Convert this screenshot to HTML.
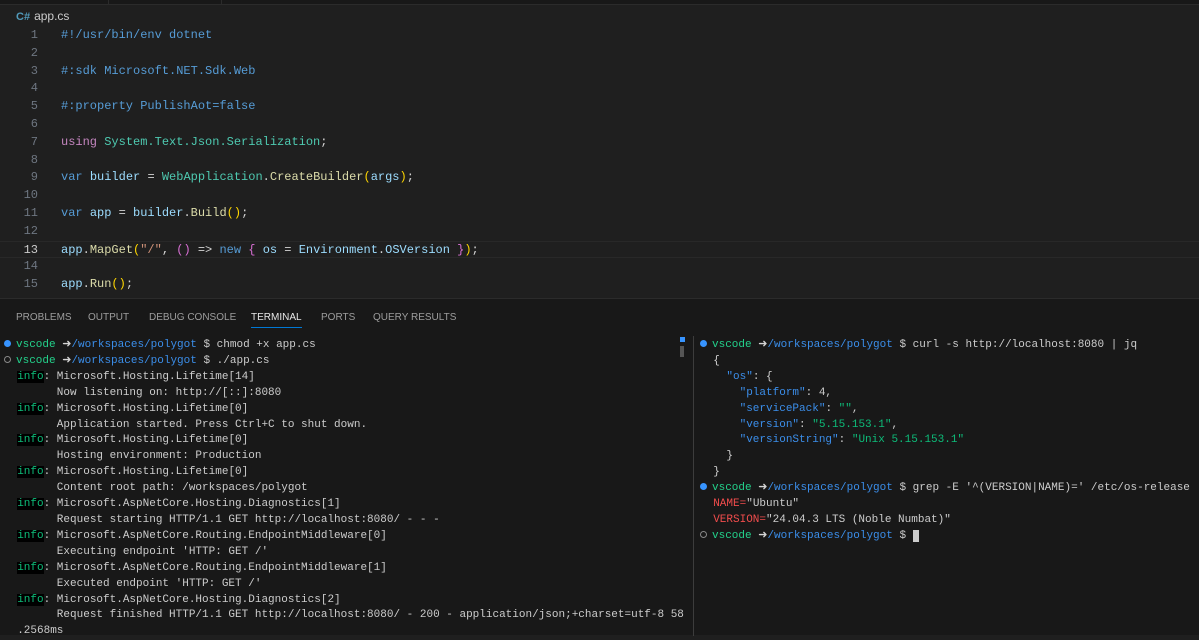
<!DOCTYPE html>
<html><head><meta charset="utf-8"><style>
*{margin:0;padding:0;box-sizing:border-box}
body{width:1199px;height:635px;background:#1f1f1f;overflow:hidden;position:relative;font-family:"Liberation Mono",monospace;color:#cccccc}
.top{position:absolute;left:0;top:0;width:1199px;height:5px;background:#181818;border-bottom:1px solid #2b2b2b}
.top i{position:absolute;top:0;width:1px;height:5px;background:#2b2b2b}
.bc{position:absolute;left:16px;top:9px;font:12px "Liberation Sans",sans-serif;color:#cccccc}
.bc b{color:#519aba;font-weight:bold;font-size:11px;margin-right:4px}
.ed{position:absolute;left:0;top:27px;width:1199px}
.ln{height:17.8px;line-height:17.8px;font-size:12px;white-space:pre;position:relative}
.ln .n{position:absolute;left:0;width:38px;text-align:right;color:#6e7681}
.ln .c{position:absolute;left:61px}
.cur{border-top:1px solid #282828;border-bottom:1px solid #282828}
.cur .n{color:#cccccc}
.k{color:#569cd6}.t{color:#4ec9b0}.p{color:#c586c0}.v{color:#9cdcfe}.f{color:#dcdcaa}.s{color:#ce9178}.y{color:#ffd700}.m{color:#da70d6}.w{color:#d4d4d4}.pp{color:#569cd6}
.panel{position:absolute;left:0;top:298px;width:1199px;height:337px;background:#181818;border-top:1px solid #2b2b2b}
.tabs{position:absolute;top:13px;left:16px;font:10px "Liberation Sans",sans-serif;color:#9d9d9d}
.tabs span{position:absolute;white-space:nowrap}
.tabs .a{color:#e7e7e7;border-bottom:1px solid #0078d4;padding-bottom:4px}
.term{position:absolute;font-size:11px;line-height:15.9px;white-space:pre;color:#cccccc}
.g{color:#23d18b}.b{color:#3b8eea}.gr{color:#0dbc79}.r{color:#f14c4c}.jn{color:#3b8eea}
.info{color:#0dbc79;background:#000}
.dot{display:inline-block;width:7px;height:7px;border-radius:50%;background:#3794ff;vertical-align:0px;margin-right:5px}
.dot.o{background:none;border:1px solid #888}
</style></head><body>
<div class="top"><i style="left:108px"></i><i style="left:221px"></i></div>
<div class="bc"><b>C#</b>app.cs</div>
<div class="ed">
<div class="ln"><span class="n">1</span><span class="c pp">#!/usr/bin/env dotnet</span></div>
<div class="ln"><span class="n">2</span></div>
<div class="ln"><span class="n">3</span><span class="c pp">#:sdk Microsoft.NET.Sdk.Web</span></div>
<div class="ln"><span class="n">4</span></div>
<div class="ln"><span class="n">5</span><span class="c pp">#:property PublishAot=false</span></div>
<div class="ln"><span class="n">6</span></div>
<div class="ln"><span class="n">7</span><span class="c"><span class="p">using</span> <span class="t">System.Text.Json.Serialization</span><span class="w">;</span></span></div>
<div class="ln"><span class="n">8</span></div>
<div class="ln"><span class="n">9</span><span class="c"><span class="k">var</span> <span class="v">builder</span> <span class="w">=</span> <span class="t">WebApplication</span><span class="w">.</span><span class="f">CreateBuilder</span><span class="y">(</span><span class="v">args</span><span class="y">)</span><span class="w">;</span></span></div>
<div class="ln"><span class="n">10</span></div>
<div class="ln"><span class="n">11</span><span class="c"><span class="k">var</span> <span class="v">app</span> <span class="w">=</span> <span class="v">builder</span><span class="w">.</span><span class="f">Build</span><span class="y">()</span><span class="w">;</span></span></div>
<div class="ln"><span class="n">12</span></div>
<div class="ln cur"><span class="n">13</span><span class="c"><span class="v">app</span><span class="w">.</span><span class="f">MapGet</span><span class="y">(</span><span class="s">"/"</span><span class="w">, </span><span class="m">()</span><span class="w"> =&gt; </span><span class="k">new</span> <span class="m">{</span> <span class="v">os</span> <span class="w">=</span> <span class="v">Environment</span><span class="w">.</span><span class="v">OSVersion</span> <span class="m">}</span><span class="y">)</span><span class="w">;</span></span></div>
<div class="ln"><span class="n">14</span></div>
<div class="ln"><span class="n">15</span><span class="c"><span class="v">app</span><span class="w">.</span><span class="f">Run</span><span class="y">()</span><span class="w">;</span></span></div>
</div>
<div class="panel">
<div class="tabs"><span style="left:0">PROBLEMS</span><span style="left:72px">OUTPUT</span><span style="left:133px">DEBUG CONSOLE</span><span class="a" style="left:235px">TERMINAL</span><span style="left:305px">PORTS</span><span style="left:357px">QUERY RESULTS</span></div>
<div style="position:absolute;left:693px;top:37px;width:1px;height:300px;background:#3c3c3c"></div>
<div style="position:absolute;left:680px;top:38px;width:5px;height:5px;background:#3794ff"></div>
<div style="position:absolute;left:680px;top:47px;width:4px;height:11px;background:#555"></div>
<div class="term" style="left:4px;top:39px"><span class="dot"></span><span class="g">vscode</span> <span class="w">➜</span><span class="b">/workspaces/polygot</span> $ chmod +x app.cs
<span class="dot o"></span><span class="g">vscode</span> <span class="w">➜</span><span class="b">/workspaces/polygot</span> $ ./app.cs
  <span class="info">info</span>: Microsoft.Hosting.Lifetime[14]
        Now listening on: http://[::]:8080
  <span class="info">info</span>: Microsoft.Hosting.Lifetime[0]
        Application started. Press Ctrl+C to shut down.
  <span class="info">info</span>: Microsoft.Hosting.Lifetime[0]
        Hosting environment: Production
  <span class="info">info</span>: Microsoft.Hosting.Lifetime[0]
        Content root path: /workspaces/polygot
  <span class="info">info</span>: Microsoft.AspNetCore.Hosting.Diagnostics[1]
        Request starting HTTP/1.1 GET http://localhost:8080/ - - -
  <span class="info">info</span>: Microsoft.AspNetCore.Routing.EndpointMiddleware[0]
        Executing endpoint 'HTTP: GET /'
  <span class="info">info</span>: Microsoft.AspNetCore.Routing.EndpointMiddleware[1]
        Executed endpoint 'HTTP: GET /'
  <span class="info">info</span>: Microsoft.AspNetCore.Hosting.Diagnostics[2]
        Request finished HTTP/1.1 GET http://localhost:8080/ - 200 - application/json;+charset=utf-8 58
  .2568ms</div>
<div class="term" style="left:700px;top:39px"><span class="dot"></span><span class="g">vscode</span> <span class="w">➜</span><span class="b">/workspaces/polygot</span> $ curl -s http://localhost:8080 | jq
  <span class="w">{</span>
    <span class="jn">"os"</span>: <span class="w">{</span>
      <span class="jn">"platform"</span>: 4,
      <span class="jn">"servicePack"</span>: <span class="gr">""</span>,
      <span class="jn">"version"</span>: <span class="gr">"5.15.153.1"</span>,
      <span class="jn">"versionString"</span>: <span class="gr">"Unix 5.15.153.1"</span>
    <span class="w">}</span>
  <span class="w">}</span>
<span class="dot"></span><span class="g">vscode</span> <span class="w">➜</span><span class="b">/workspaces/polygot</span> $ grep -E '^(VERSION|NAME)=' /etc/os-release
  <span class="r">NAME=</span>"Ubuntu"
  <span class="r">VERSION=</span>"24.04.3 LTS (Noble Numbat)"
<span class="dot o"></span><span class="g">vscode</span> <span class="w">➜</span><span class="b">/workspaces/polygot</span> $ <span style="background:#ccc"> </span></div>
</div>
</body></html>
